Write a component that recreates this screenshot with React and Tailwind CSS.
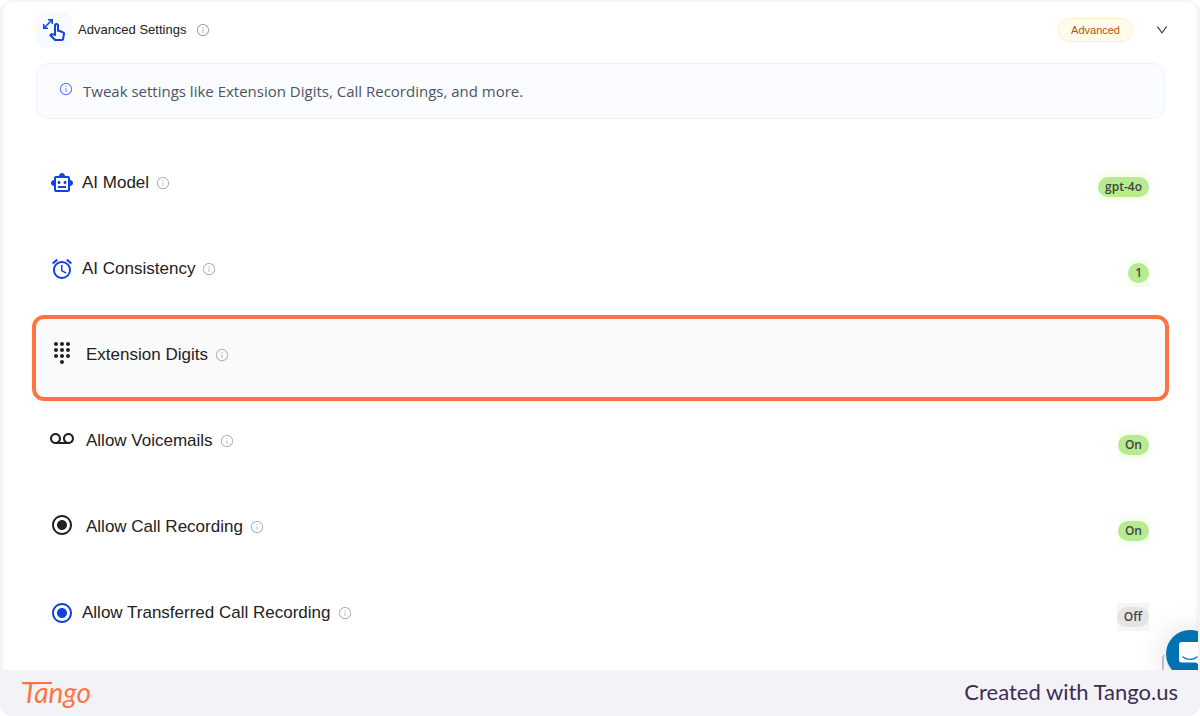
import { AiOutlineDown, AiOutlineInfoCircle } from 'react-icons/ai';
import {
    MdAccessAlarm,
    MdDialpad,
    MdOutlinePinch,
    MdOutlineSmartToy,
    MdRadioButtonChecked,
    MdVoicemail,
} from 'react-icons/md';
import clsx from 'clsx';

const settings = [
    { key: 'model', label: 'AI Model', icon: MdOutlineSmartToy, value: 'gpt-4o', primary: true },
    { key: 'consistency', label: 'AI Consistency', icon: MdAccessAlarm, value: '1', primary: true },
    { key: 'digits', label: 'Extension Digits', icon: MdDialpad, highlighted: true },
    { key: 'voicemail', label: 'Allow Voicemails', icon: MdVoicemail, value: 'On' },
    { key: 'recording', label: 'Allow Call Recording', icon: MdRadioButtonChecked, value: 'On' },
    {
        key: 'transferred',
        label: 'Allow Transferred Call Recording',
        icon: MdRadioButtonChecked,
        value: 'Off',
        primary: true,
    },
];

function ValueBadge({ value }) {
    const off = value === 'Off';

    return (
        <span className={clsx('mt-1 flex py-1', off ? 'bg-[#f5f5f5]' : 'bg-[#f6ffed]')}>
            <span
                className={clsx(
                    'min-w-5 rounded-full px-[7px] text-center font-["Open_Sans",sans-serif] text-xs leading-5 font-semibold text-[#444]',
                    off ? 'bg-[#e4e4e4]' : 'bg-[#b7eb8f]'
                )}
            >
                {value}
            </span>
        </span>
    );
}

function SettingRow({ label, icon: Icon, value, primary, highlighted }) {
    return (
        <button
            type="button"
            className={clsx(
                'flex min-h-[86px] w-full items-start border-4 pt-[22px] pr-4 pl-3.5 text-left',
                highlighted ? 'rounded-xl border-[#ff7442] bg-[#fafafa]' : 'border-transparent'
            )}
        >
            <span
                className={clsx(
                    'flex items-center',
                    primary ? 'h-7 w-8 text-[#1242df]' : 'h-6 w-9 text-[#222]'
                )}
            >
                <Icon className="size-6" />
            </span>
            <span className="text-[17px] leading-7 text-[#222]">{label}</span>
            <AiOutlineInfoCircle className="mt-[7px] ml-[7px] size-3.5 text-[#b0b5bf]" />
            <span className="ml-auto">{value && <ValueBadge value={value} />}</span>
        </button>
    );
}

function ChatLauncher() {
    return (
        <>
            <div className="absolute right-0 bottom-0 h-4 w-9 rounded-tl border-t border-l-2 border-t-[#eee] border-l-[#c8c8c8] bg-white" />
            <button
                type="button"
                aria-label="Open chat"
                className="absolute -right-4 -bottom-2 flex size-12 items-center justify-center rounded-full bg-[#0071b2] shadow-[0_2px_32px_rgba(0,0,0,0.16)]"
            >
                <svg viewBox="0 0 24 26" className="h-[26px] w-6" fill="none">
                    <path
                        d="M3.5 1h17A2.5 2.5 0 0 1 23 3.5V25l-5-3.5H3.5A2.5 2.5 0 0 1 1 19V3.5A2.5 2.5 0 0 1 3.5 1Z"
                        fill="#fff"
                    />
                    <path d="M5 16c4 3.2 10 3.2 14 0" stroke="#0071b2" strokeWidth="1.4" strokeLinecap="round" />
                </svg>
            </button>
        </>
    );
}

export default function App() {
    return (
        <div className='overflow-hidden rounded-xl bg-[#f3f2f7] font-["Liberation_Sans",Arial,sans-serif]'>
            <div className="px-0.5 pt-0.5">
                <main className="relative overflow-hidden rounded-t-lg bg-white pt-[10px] pr-[33px] pb-[11px] pl-[34px] shadow-[inset_2px_0_#f8f8fc,inset_-2px_0_#f8f8fc]">
                    <header className="flex items-center">
                        <span className="flex size-9 items-center justify-center rounded-lg bg-[#f7fbff]">
                            <MdOutlinePinch className="size-6 text-[#1242df]" />
                        </span>
                        <h1 className="ml-1.5 text-[13px] text-[#222]">Advanced Settings</h1>
                        <AiOutlineInfoCircle className="ml-2.5 size-3.5 text-[#a5a5a5]" />
                        <span className="ml-auto rounded-full border border-[#fff0c2] bg-[#fffbeb] px-3 text-[11px] leading-[22px] text-[#b45309]">
                            Advanced
                        </span>
                        <button type="button" aria-label="Collapse advanced settings" className="-mr-1 ml-[22px]">
                            <AiOutlineDown className="size-3.5 text-[#333]" />
                        </button>
                    </header>

                    <div className="mt-[15px] flex h-14 items-center rounded-xl border border-[#eaf3ff] bg-[#fafcff] pr-6 pl-[22px]">
                        <AiOutlineInfoCircle className="mb-1 size-3.5 text-[#4d7cf5]" />
                        <p className='ml-2.5 font-["Open_Sans",sans-serif] text-[15px] text-[#4b5563]'>
                            Tweak settings like Extension Digits, Call Recordings, and more.
                        </p>
                    </div>

                    <section className="-mx-1 mt-6">
                        {settings.map(({ key, ...setting }) => (
                            <SettingRow key={key} {...setting} />
                        ))}
                    </section>

                    <ChatLauncher />
                </main>
            </div>

            <footer className="flex h-[46px] items-center justify-between px-[22px] pb-[3px]">
                {/* Wordmark with the long crossbar of its T */}
                <span className="relative font-[Lato,sans-serif] text-[28px] leading-none text-[#ff7442] italic">
                    <span>Tango</span>
                    <svg
                        viewBox="0 0 30 2"
                        className="absolute top-1 left-0 h-0.5 w-[30px]"
                        stroke="currentColor"
                        strokeWidth="2"
                    >
                        <path d="M0 1h30" />
                    </svg>
                </span>
                <a href="#tango" className="font-[Lato,sans-serif] text-[22px] text-[#3e2c52]">
                    Created with Tango.us
                </a>
            </footer>
        </div>
    );
}
